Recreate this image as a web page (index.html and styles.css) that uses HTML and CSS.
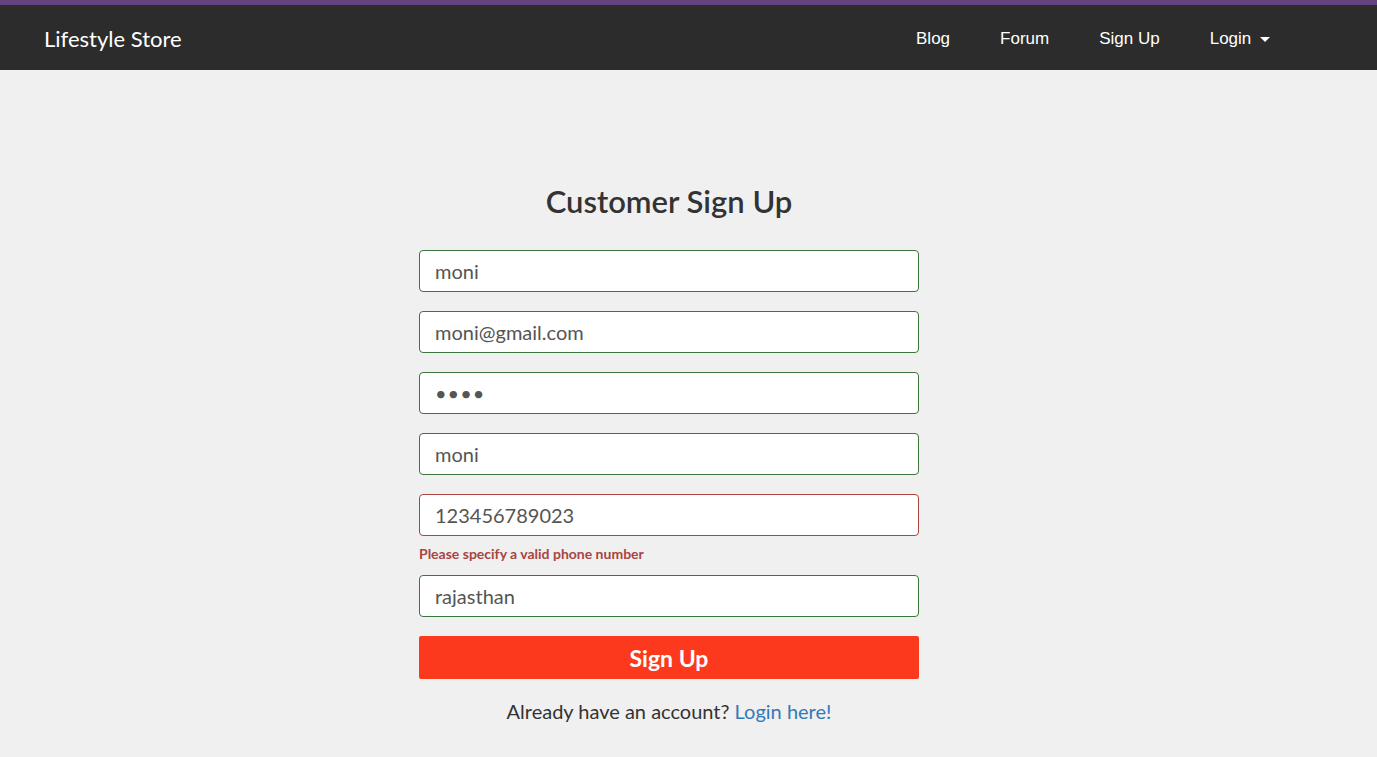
FILE: index.html
```html
<!DOCTYPE html>
<html lang="en">
<head>
<meta charset="utf-8">
<title>Lifestyle Store - Sign Up</title>
<link rel="stylesheet" href="styles.css">
</head>
<body>
<header class="topbar">
  <nav class="navbar">
    <a class="brand" href="#">Lifestyle Store</a>
    <ul class="nav-links">
      <li><a href="#">Blog</a></li>
      <li><a href="#">Forum</a></li>
      <li><a href="#">Sign Up</a></li>
      <li><a href="#">Login <span class="caret"></span></a></li>
    </ul>
  </nav>
</header>
<main class="page">
  <section class="signup">
    <h1 class="title">Customer Sign Up</h1>
    <form class="form">
      <div class="field"><input class="input ok" type="text" value="moni"></div>
      <div class="field"><input class="input ok" type="text" value="moni@gmail.com"></div>
      <div class="field"><input class="input ok pw" type="password" value="moni"></div>
      <div class="field"><input class="input ok" type="text" value="moni"></div>
      <div class="field has-error"><input class="input bad" type="text" value="123456789023"><span class="error">Please specify a valid phone number</span></div>
      <div class="field"><input class="input ok" type="text" value="rajasthan"></div>
      <button class="btn" type="button">Sign Up</button>
    </form>
    <p class="login-line">Already have an account? <a href="#">Login here!</a></p>
  </section>
</main>
</body>
</html>
```
FILE: styles.css
```css
* { box-sizing: border-box; }
html, body { margin: 0; padding: 0; }
body {
  background: #f0f0f0;
  font-family: Lato, "Open Sans", sans-serif;
  color: #333;
  height: 757px;
  overflow: hidden;
}
.topbar {
  border-top: 5px solid #634480;
  background: #2c2c2c;
}
.navbar {
  height: 65px;
  display: flex;
  align-items: center;
  justify-content: space-between;
  padding: 1px 107px 0 44px;
}
.brand {
  color: #fff;
  text-decoration: none;
  font-size: 22px;
  font-family: Lato, sans-serif;
}
.nav-links {
  list-style: none;
  margin: 0;
  padding: 0;
  display: flex;
  gap: 50px;
}
.nav-links a {
  color: #fff;
  text-decoration: none;
  font-family: "Liberation Sans", Arial, sans-serif;
  font-size: 17px;
}
.caret {
  display: inline-block;
  width: 0;
  height: 0;
  margin-left: 4px;
  vertical-align: middle;
  border-top: 5px solid #fff;
  border-left: 5px solid transparent;
  border-right: 5px solid transparent;
}
.page {
  display: flex;
  justify-content: center;
  padding: 113px 39px 0 0;
}
.signup {
  width: 500px;
}
.title {
  margin: 0 0 31px;
  text-align: center;
  font-size: 31px;
  font-weight: 600;
  color: #333;
  line-height: 36px;
}
.form {
  display: flex;
  flex-direction: column;
}
.field {
  margin-bottom: 19px;
  display: flex;
  flex-direction: column;
}
.input {
  width: 500px;
  height: 42px;
  border-radius: 4px;
  background: #fff;
  padding: 0 15px;
  font-family: Lato, sans-serif;
  font-size: 20px;
  color: #555;
  outline: none;
}
.input.ok { border: 1px solid #3c763d; }
.input.bad { border: 1px solid #a94442; }
.input.pw { letter-spacing: 1px; }
.has-error { margin-bottom: 13px; }
.error {
  margin-top: 9px;
  font-size: 14px;
  font-weight: 700;
  color: #a94442;
  line-height: 17px;
}
.btn {
  width: 500px;
  height: 43px;
  border: none;
  border-radius: 2px;
  background: #fc391c;
  color: #fff;
  font-family: Lato, sans-serif;
  font-size: 23px;
  font-weight: 700;
}
.login-line {
  margin: 20px 0 0;
  text-align: center;
  font-size: 20px;
  line-height: 24px;
  color: #333;
}
.login-line a {
  color: #337ab7;
  text-decoration: none;
}
```
